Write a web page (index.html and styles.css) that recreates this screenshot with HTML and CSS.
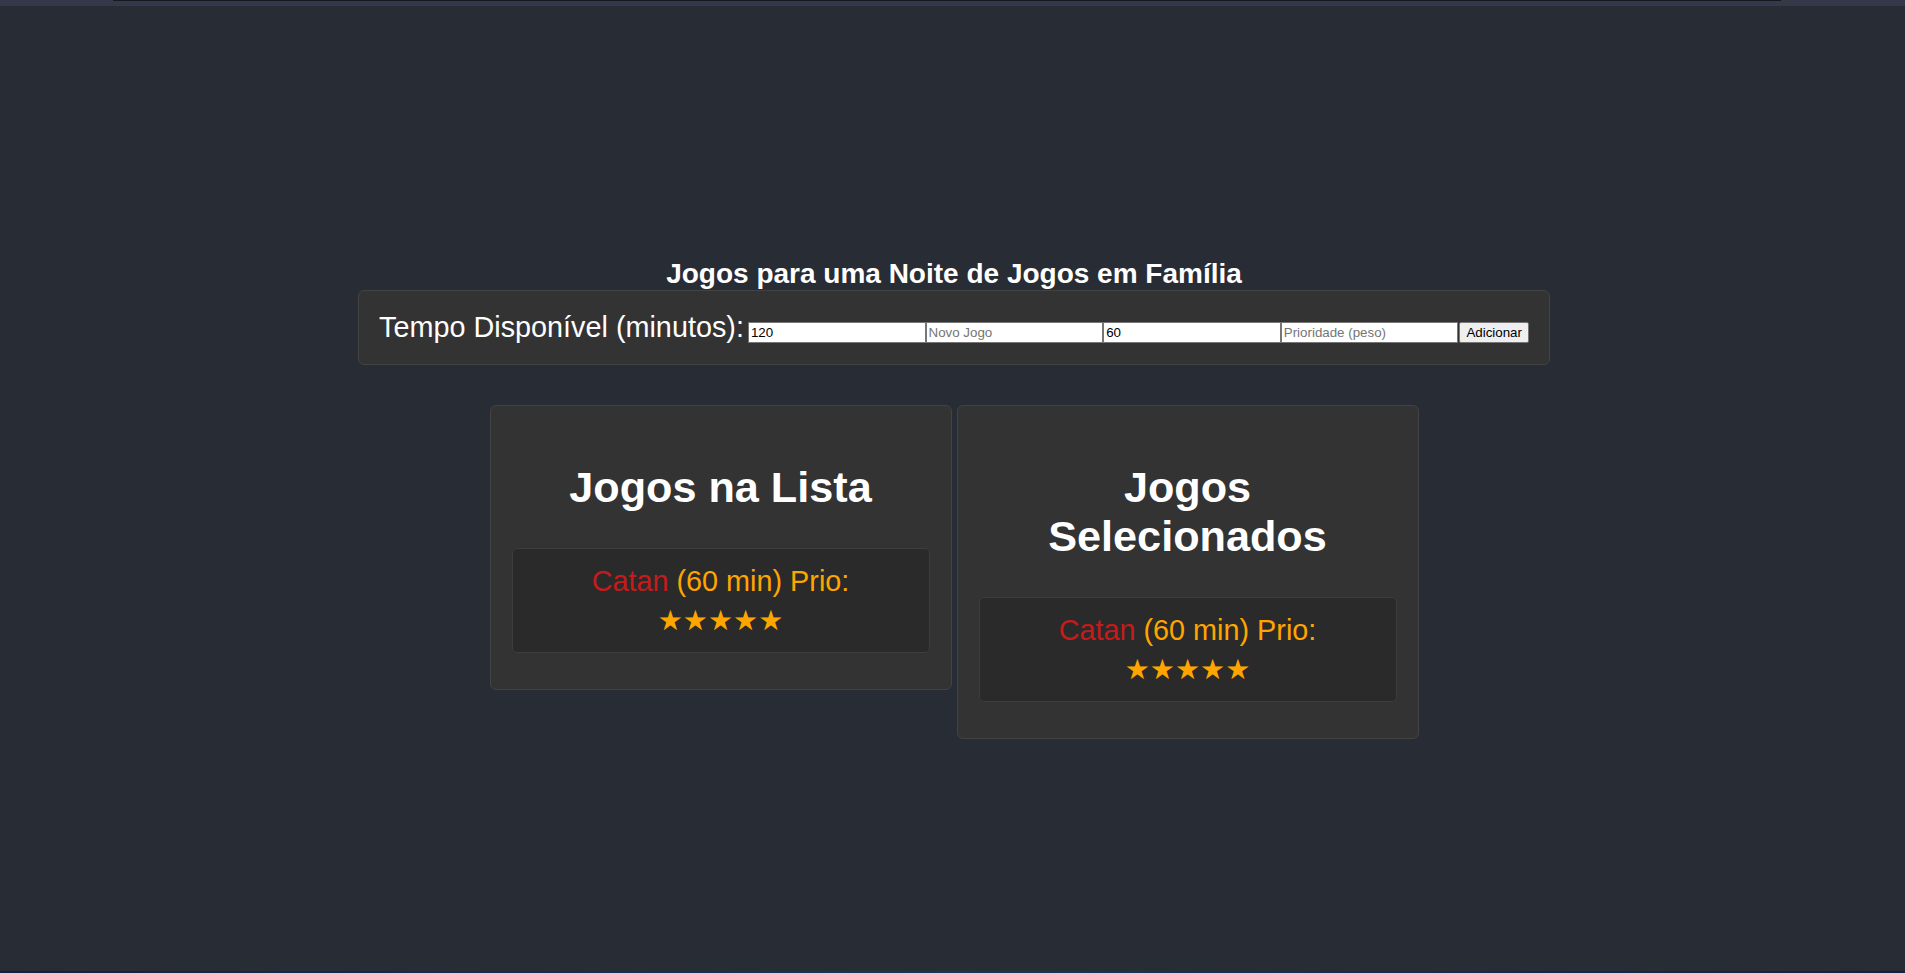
FILE: index.html
```html
<!DOCTYPE html>
<html lang="pt">
<head>
<meta charset="utf-8">
<title>Jogos para uma Noite de Jogos em Família</title>
<link rel="stylesheet" href="styles.css">
</head>
<body>
<div class="topbar"><div class="topline"></div></div>
<main class="app">
  <h1 class="title">Jogos para uma Noite de Jogos em Família</h1>
  <div class="controls">
    <label class="time-label" for="tempo">Tempo Disponível (minutos):</label>
    <input class="field" id="tempo" type="number" value="120">
    <input class="field" type="text" placeholder="Novo Jogo">
    <input class="field" type="number" value="60">
    <input class="field" type="number" placeholder="Prioridade (peso)">
    <button class="add-btn" type="button">Adicionar</button>
  </div>
  <div class="columns">
    <section class="card">
      <h2 class="card-title">Jogos na Lista</h2>
      <div class="game">
        <span class="game-name">Catan</span><span class="game-meta"> (60 min) Prio:</span>
        <span class="stars">★★★★★</span>
      </div>
    </section>
    <section class="card">
      <h2 class="card-title">Jogos Selecionados</h2>
      <div class="game">
        <span class="game-name">Catan</span><span class="game-meta"> (60 min) Prio:</span>
        <span class="stars">★★★★★</span>
      </div>
    </section>
  </div>
</main>
<div class="bottombar"></div>
</body>
</html>
```

FILE: styles.css
```css
* {
  box-sizing: border-box;
}

html, body {
  margin: 0;
  padding: 0;
}

body {
  background: #282c35;
  font-family: "Liberation Sans", Arial, sans-serif;
  color: #ffffff;
  height: 973px;
  overflow: hidden;
}

.topbar {
  height: 6px;
  background: #353849;
}

.topline {
  height: 1px;
  margin: 0 124px 0 113px;
  background: #16181d;
}

.app {
  height: 965px;
  padding: 20px 0 0 3px;
  display: flex;
  flex-direction: column;
  align-items: center;
  justify-content: center;
}

.title {
  margin: 0;
  font-size: 28px;
  font-weight: bold;
  text-align: center;
  color: #ffffff;
}

.controls {
  width: 1192px;
  display: flex;
  align-items: baseline;
  padding: 20px;
  background: #333333;
  border: 1px solid #434343;
  border-radius: 6px;
}

.time-label {
  padding-right: 4px;
  font-size: 28.8px;
  color: #ffffff;
  white-space: nowrap;
}

.field {
  flex: 1 1 0;
  min-width: 0;
  height: 21px;
  margin: 0;
  padding: 1px 2px;
  border: 1px solid #767676;
  background: #ffffff;
  color: #000000;
  font-family: "Liberation Sans", Arial, sans-serif;
  font-size: 13.333px;
  -moz-appearance: textfield;
}

.field::-webkit-outer-spin-button,
.field::-webkit-inner-spin-button {
  -webkit-appearance: none;
  margin: 0;
}

.field::placeholder {
  color: #757575;
}

.add-btn {
  margin-left: 1px;
  height: 21px;
  padding: 1px 6px;
  border: 1px solid #767676;
  border-radius: 2px;
  background: #efefef;
  color: #000000;
  font-family: "Liberation Sans", Arial, sans-serif;
  font-size: 13.333px;
}

.columns {
  margin-top: 40px;
  display: flex;
  align-items: flex-start;
  gap: 5px;
}

.card {
  width: 462px;
  padding: 21px;
  background: #333333;
  border: 1px solid #434343;
  border-radius: 6px;
}

.card-title {
  margin: 0.83em 0;
  padding: 0 4px;
  font-size: 43.2px;
  font-weight: bold;
  text-align: center;
  color: #ffffff;
}

.game {
  margin-bottom: 15px;
  padding: 16px 15px 8px;
  background: #2a2a2a;
  border: 1px solid #3d3d3d;
  border-radius: 5px;
  text-align: center;
  font-size: 28.8px;
}

.game-name {
  color: #c41c1c;
}

.game-meta {
  color: #ffa500;
}

.stars {
  display: block;
  color: #ffa500;
  font-family: "DejaVu Sans", sans-serif;
  font-size: 28px;
  line-height: 46px;
}

.bottombar {
  height: 2px;
  background: linear-gradient(90deg, #0d2440, #0f3a5c 50%, #0d2440);
}
```
